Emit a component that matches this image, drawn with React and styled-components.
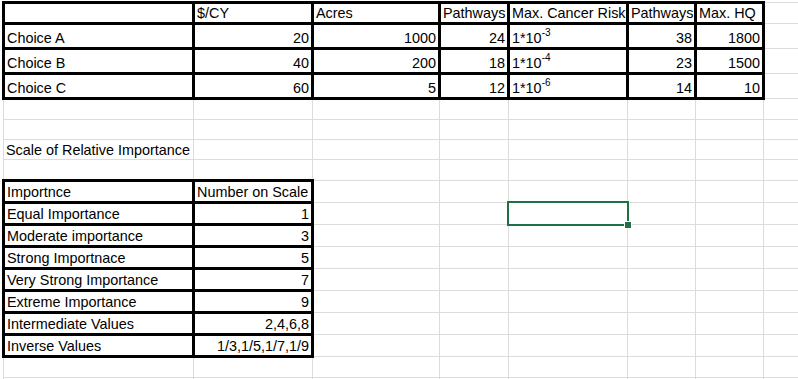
import React from 'react';
import styled, {createGlobalStyle, css} from 'styled-components';

const GlobalStyle = createGlobalStyle`
  html, body {
    margin: 0;
    padding: 0;
    background: #ffffff;
    overflow: hidden;
  }
`;

const COLS = [190, 119, 127, 69, 119, 68, 68, 60];

const SheetWrap = styled.div`
  width: 798px;
  height: 379px;
  overflow: hidden;
  padding: 1px 0 0 2px;
  box-sizing: border-box;
`;

const Sheet = styled.table`
  border-collapse: collapse;
  table-layout: fixed;
  width: ${COLS.reduce((a, b) => a + b, 0)}px;
  font-family: "Liberation Sans", Arial, sans-serif;
  font-size: 14.4px;
  color: #000;
`;

const Row = styled.tr`
  height: ${p => p.$h}px;
`;

const Cell = styled.td`
  position: relative;
  border: 1px solid #dcdcdc;
  padding: 0 2px;
  line-height: 17px;
  white-space: nowrap;
  vertical-align: bottom;
  text-align: ${p => (p.$num ? 'right' : 'left')};
  ${p => p.$box && css`
    border: 3px solid #000;
  `}
`;

const Sup = styled.sup`
  font-size: 10px;
  line-height: 0;
  vertical-align: 7px;
`;

const Selection = styled.div`
  position: absolute;
  left: -2px;
  top: -2px;
  right: -2px;
  bottom: -2px;
  border: 2px solid #1f7145;
  pointer-events: none;
`;

const FillHandle = styled.div`
  position: absolute;
  right: -5px;
  bottom: -5px;
  width: 6px;
  height: 6px;
  background: #1f7145;
  border: 1px solid #fff;
`;

const power = (exp) => (
  <>1*10<Sup>{exp}</Sup></>
);

const costTable = [
  ['', '$/CY', 'Acres', 'Pathways', 'Max. Cancer Risk', 'Pathways', 'Max. HQ'],
  ['Choice A', 20, 1000, 24, power('-3'), 38, 1800],
  ['Choice B', 40, 200, 18, power('-4'), 23, 1500],
  ['Choice C', 60, 5, 12, power('-6'), 14, 10],
];

const scale = [
  ['Importnce', 'Number on Scale', false],
  ['Equal Importance', '1', true],
  ['Moderate importance', '3', true],
  ['Strong Importnace', '5', true],
  ['Very Strong Importance', '7', true],
  ['Extreme Importance', '9', true],
  ['Intermediate Values', '2,4,6,8', true],
  ['Inverse Values', '1/3,1/5,1/7,1/9', true],
];

const Blank = ({count}) => Array.from({length: count}).map((_, i) => <Cell key={i}/>);

const App = () => {
  return (
    <SheetWrap>
      <GlobalStyle/>
      <Sheet>
        <colgroup>
          {COLS.map((w, i) => <col key={i} style={{width: w}}/>)}
        </colgroup>
        <tbody>
          {costTable.map((row, r) => (
            <Row key={r} $h={r === 0 ? 21 : 25}>
              {row.map((val, c) => (
                <Cell key={c} $box $num={r > 0 && c > 0 && c !== 4}>{val}</Cell>
              ))}
              <Cell/>
            </Row>
          ))}
          <Row $h={21}><Blank count={8}/></Row>
          <Row $h={20}><Blank count={8}/></Row>
          <Row $h={20}>
            <Cell>Scale of Relative Importance</Cell>
            <Blank count={7}/>
          </Row>
          <Row $h={21}><Blank count={8}/></Row>
          {scale.map(([label, value, num], r) => (
            <Row key={r} $h={22}>
              <Cell $box>{label}</Cell>
              <Cell $box $num={num}>{value}</Cell>
              <Blank count={2}/>
              <Cell>
                {r === 1 && (
                  <Selection>
                    <FillHandle/>
                  </Selection>
                )}
              </Cell>
              <Blank count={3}/>
            </Row>
          ))}
          <Row $h={21}><Blank count={8}/></Row>
          <Row $h={20}><Blank count={8}/></Row>
        </tbody>
      </Sheet>
    </SheetWrap>
  );
};

export default App;
